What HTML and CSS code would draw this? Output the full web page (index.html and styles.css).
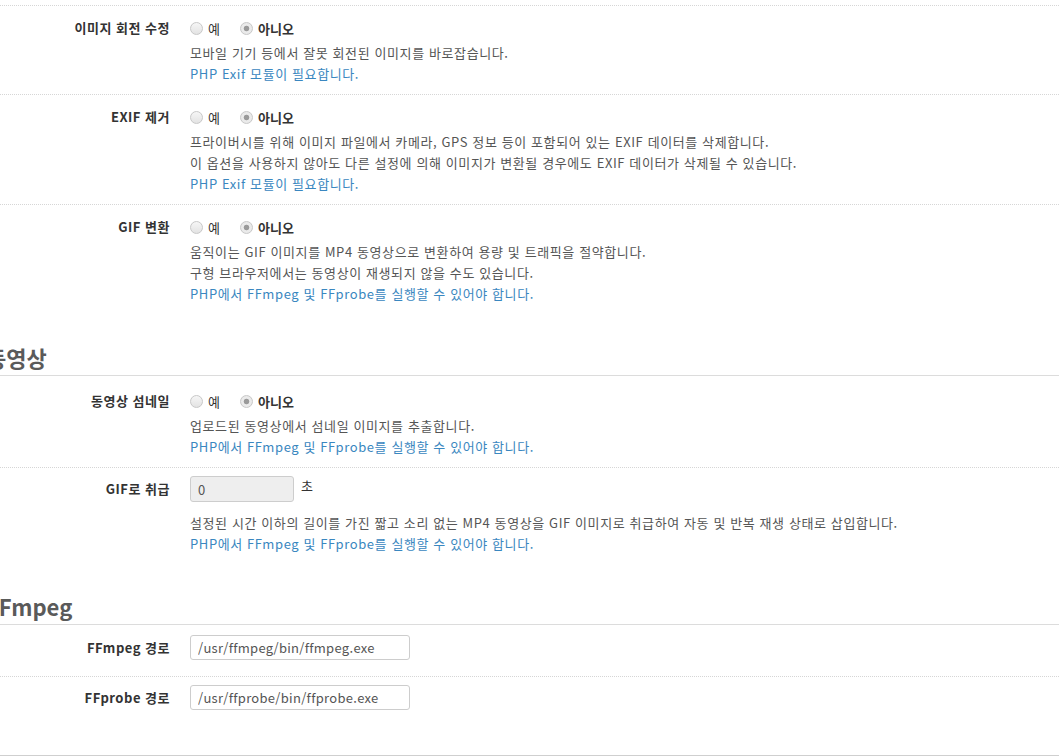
FILE: index.html
```html
<!DOCTYPE html>
<html lang="ko">
<head>
<meta charset="utf-8">
<title>설정</title>
<link rel="stylesheet" href="styles.css">
</head>
<body>
<div class="page">
  <div class="row">
    <div class="label radio-label">이미지 회전 수정</div>
    <div class="field">
      <div class="choices">
        <label class="choice"><input type="radio" name="rotate"><span>예</span></label>
        <label class="choice on"><input type="radio" name="rotate" checked><span>아니오</span></label>
      </div>
      <p class="help">모바일 기기 등에서 잘못 회전된 이미지를 바로잡습니다.</p>
      <p class="help req">PHP Exif 모듈이 필요합니다.</p>
    </div>
  </div>
  <div class="row">
    <div class="label radio-label">EXIF 제거</div>
    <div class="field">
      <div class="choices">
        <label class="choice"><input type="radio" name="exif"><span>예</span></label>
        <label class="choice on"><input type="radio" name="exif" checked><span>아니오</span></label>
      </div>
      <p class="help">프라이버시를 위해 이미지 파일에서 카메라, GPS 정보 등이 포함되어 있는 EXIF 데이터를 삭제합니다.</p>
      <p class="help">이 옵션을 사용하지 않아도 다른 설정에 의해 이미지가 변환될 경우에도 EXIF 데이터가 삭제될 수 있습니다.</p>
      <p class="help req">PHP Exif 모듈이 필요합니다.</p>
    </div>
  </div>
  <div class="row last">
    <div class="label radio-label">GIF 변환</div>
    <div class="field">
      <div class="choices">
        <label class="choice"><input type="radio" name="gif"><span>예</span></label>
        <label class="choice on"><input type="radio" name="gif" checked><span>아니오</span></label>
      </div>
      <p class="help">움직이는 GIF 이미지를 MP4 동영상으로 변환하여 용량 및 트래픽을 절약합니다.</p>
      <p class="help">구형 브라우저에서는 동영상이 재생되지 않을 수도 있습니다.</p>
      <p class="help req">PHP에서 FFmpeg 및 FFprobe를 실행할 수 있어야 합니다.</p>
    </div>
  </div>

  <h2 class="section-title">동영상</h2>
  <div class="row first">
    <div class="label radio-label">동영상 섬네일</div>
    <div class="field">
      <div class="choices">
        <label class="choice"><input type="radio" name="thumb"><span>예</span></label>
        <label class="choice on"><input type="radio" name="thumb" checked><span>아니오</span></label>
      </div>
      <p class="help">업로드된 동영상에서 섬네일 이미지를 추출합니다.</p>
      <p class="help req">PHP에서 FFmpeg 및 FFprobe를 실행할 수 있어야 합니다.</p>
    </div>
  </div>
  <div class="row last input-row with-help">
    <div class="label input-label">GIF로 취급</div>
    <div class="field">
      <div class="inline">
        <input class="text short" type="text" value="0" disabled>
        <span class="unit">초</span>
      </div>
      <p class="help spaced">설정된 시간 이하의 길이를 가진 짧고 소리 없는 MP4 동영상을 GIF 이미지로 취급하여 자동 및 반복 재생 상태로 삽입합니다.</p>
      <p class="help req">PHP에서 FFmpeg 및 FFprobe를 실행할 수 있어야 합니다.</p>
    </div>
  </div>

  <h2 class="section-title">FFmpeg</h2>
  <div class="row first input-row">
    <div class="label input-label">FFmpeg 경로</div>
    <div class="field">
      <input class="text" type="text" value="/usr/ffmpeg/bin/ffmpeg.exe">
    </div>
  </div>
  <div class="row last input-row">
    <div class="label input-label">FFprobe 경로</div>
    <div class="field">
      <input class="text" type="text" value="/usr/ffprobe/bin/ffprobe.exe">
    </div>
  </div>
  <div class="actions"></div>
</div>
</body>
</html>
```

FILE: styles.css
```css
html, body {
  margin: 0;
  padding: 0;
  background: #fff;
}
body {
  overflow: hidden;
  font-family: "Noto Sans CJK KR", "Noto Sans", sans-serif;
  font-size: 13px;
  color: #333;
}
.page {
  margin-left: -14px;
  padding-top: 5px;
}
.row {
  display: grid;
  grid-template-columns: 184px 1fr;
  column-gap: 20px;
  border-top: 1px dotted #d6d6d6;
  padding: 8px 0 10px;
}
.row.first {
  border-top: 0;
}
.label {
  text-align: right;
  font-weight: bold;
  color: #333;
  font-size: 13px;
  letter-spacing: 0.5px;
  white-space: nowrap;
}
.radio-label {
  line-height: 27px;
}
.input-label {
  line-height: 26px;
}
.field {
  min-width: 0;
}
.choices {
  display: flex;
  align-items: center;
  height: 28px;
}
.choice {
  display: flex;
  align-items: center;
  margin-right: 20px;
  color: #333;
}
.choice.on span {
  font-weight: bold;
}
.choice input {
  appearance: none;
  -webkit-appearance: none;
  width: 13px;
  height: 13px;
  margin: 1px 5px 0 0;
  border: 1px solid #c8c8c8;
  border-radius: 50%;
  background: linear-gradient(#f6f6f6, #e3e3e3);
  box-sizing: border-box;
}
.choice input:checked {
  background: radial-gradient(circle, #9a9a9a 0, #9a9a9a 2.4px, #ececec 3.2px, #e6e6e6 100%);
}
.help {
  margin: 0;
  line-height: 21px;
  font-size: 13px;
  letter-spacing: 0.6px;
  color: #555;
  white-space: nowrap;
}
.help.req {
  color: #3a87c0;
}
.help.spaced {
  margin-top: 10px;
}
.section-title {
  margin: 28px 0 3px;
  padding: 0 0 3px;
  font-size: 22px;
  line-height: 30px;
  font-weight: bold;
  color: #5a5a5a;
  border-bottom: 1px solid #dcdcdc;
}
.input-row {
  padding-bottom: 15px;
}
.input-row.with-help {
  padding-bottom: 9px;
}
.section-title + .input-row {
  padding-top: 7px;
}
.inline {
  display: flex;
  align-items: flex-start;
}
.unit {
  margin-left: 7px;
  line-height: 20px;
  color: #333;
}
.text {
  display: block;
  box-sizing: border-box;
  width: 220px;
  height: 25px;
  margin: 0;
  padding: 0 7px;
  border: 1px solid #cdcdcd;
  border-radius: 3px;
  background: #fff;
  font-family: "Noto Sans CJK KR", "Noto Sans", sans-serif;
  font-size: 13px;
  letter-spacing: 0.3px;
  color: #555;
}
.text.short {
  width: 104px;
  height: 26px;
  background: #eee;
  color: #555;
}
.actions {
  margin-top: 29px;
  border-top: 1px solid #cfcfcf;
  height: 10px;
}
```
